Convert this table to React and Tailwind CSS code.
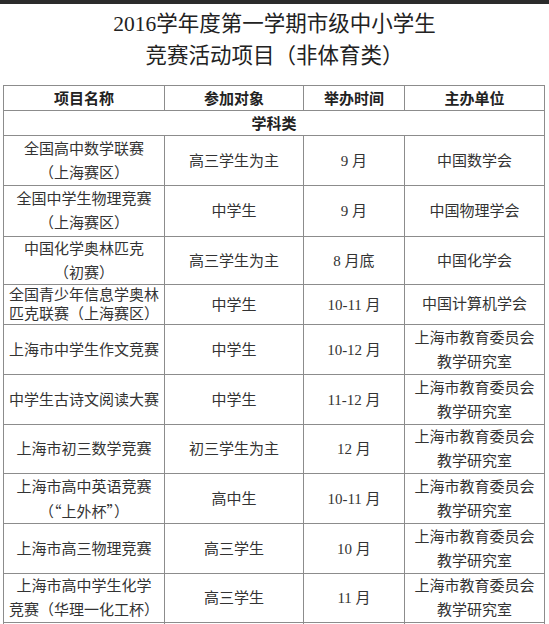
import React from "react";

const rows = [
  { h: "h-[50px]", a: ["全国高中数学联赛", "（上海赛区）"], b: "高三学生为主", c: "9 月", d: ["中国数学会"] },
  { h: "h-[51px]", a: ["全国中学生物理竞赛", "（上海赛区）"], b: "中学生", c: "9 月", d: ["中国物理学会"] },
  { h: "h-[48px]", a: ["中国化学奥林匹克", "（初赛）"], b: "高三学生为主", c: "8 月底", d: ["中国化学会"] },
  { h: "h-[40px]", a: ["全国青少年信息学奥林", "匹克联赛（上海赛区）"], b: "中学生", c: "10-11 月", d: ["中国计算机学会"], tight: true },
  { h: "h-[50px]", a: ["上海市中学生作文竞赛"], b: "中学生", c: "10-12 月", d: ["上海市教育委员会", "教学研究室"] },
  { h: "h-[50px]", a: ["中学生古诗文阅读大赛"], b: "中学生", c: "11-12 月", d: ["上海市教育委员会", "教学研究室"] },
  { h: "h-[49px]", a: ["上海市初三数学竞赛"], b: "初三学生为主", c: "12 月", d: ["上海市教育委员会", "教学研究室"] },
  { h: "h-[50px]", a: ["上海市高中英语竞赛", "（“上外杯”）"], b: "高中生", c: "10-11 月", d: ["上海市教育委员会", "教学研究室"], cjkQuote: true },
  { h: "h-[50px]", a: ["上海市高三物理竞赛"], b: "高三学生", c: "10 月", d: ["上海市教育委员会", "教学研究室"] },
  { h: "h-[49px]", a: ["上海市高中学生化学", "竞赛（华理一化工杯）"], b: "高三学生", c: "11 月", d: ["上海市教育委员会", "教学研究室"] },
];

function Cell({ lines, tight, cjkQuote }) {
  return (
    <div
      className={`flex flex-col items-center justify-center text-center whitespace-nowrap border-r border-[#8c8c8c] ${
        tight ? "leading-[19px]" : "leading-[24px]"
      }`}
    >
      {lines.map((l, i) => (
        <span
          key={i}
          style={cjkQuote && i === 1 ? { fontFamily: '"Noto Sans CJK SC", sans-serif' } : undefined}
        >
          {l}
        </span>
      ))}
    </div>
  );
}

export default function App() {
  const serif = { fontFamily: '"Liberation Serif", "Noto Sans CJK SC", serif' };
  return (
    <div className="w-[549px] h-[624px] overflow-hidden bg-white text-[#333]" style={serif}>
      <div className="h-[4px] bg-[#2b2b2b]" />
      <div className="pt-[4px] text-center text-[21.5px] leading-[32px] text-[#222]">
        <div>2016学年度第一学期市级中小学生</div>
        <div>竞赛活动项目（非体育类）</div>
      </div>
      <div className="mt-[13px] ml-[3px] w-[542px] border-t border-l border-[#8c8c8c] text-[15px]">
        <div
          className="grid grid-cols-[161px_139px_101px_140px] h-[25px] border-b border-[#8c8c8c] font-bold text-[#222] leading-[24px]"
          style={{ fontFamily: '"Noto Sans CJK SC", sans-serif' }}
        >
          <div className="flex items-center justify-center border-r border-[#8c8c8c]">项目名称</div>
          <div className="flex items-center justify-center border-r border-[#8c8c8c]">参加对象</div>
          <div className="flex items-center justify-center border-r border-[#8c8c8c]">举办时间</div>
          <div className="flex items-center justify-center border-r border-[#8c8c8c]">主办单位</div>
        </div>
        <div
          className="flex h-[25px] items-center justify-center border-b border-r border-[#8c8c8c] font-bold text-[#222]"
          style={{ fontFamily: '"Noto Sans CJK SC", sans-serif' }}
        >
          学科类
        </div>
        {rows.map((r, i) => (
          <div
            key={i}
            className={`grid grid-cols-[161px_139px_101px_140px] ${r.h} border-b border-[#8c8c8c]`}
          >
            <Cell lines={r.a} tight={r.tight} cjkQuote={r.cjkQuote} />
            <Cell lines={[r.b]} />
            <Cell lines={[r.c]} />
            <Cell lines={r.d} tight={r.tight} />
          </div>
        ))}
        <div className="grid grid-cols-[161px_139px_101px_140px] h-[40px]">
          <div className="border-r border-[#8c8c8c]" />
          <div className="border-r border-[#8c8c8c]" />
          <div className="border-r border-[#8c8c8c]" />
          <div className="border-r border-[#8c8c8c]" />
        </div>
      </div>
    </div>
  );
}
